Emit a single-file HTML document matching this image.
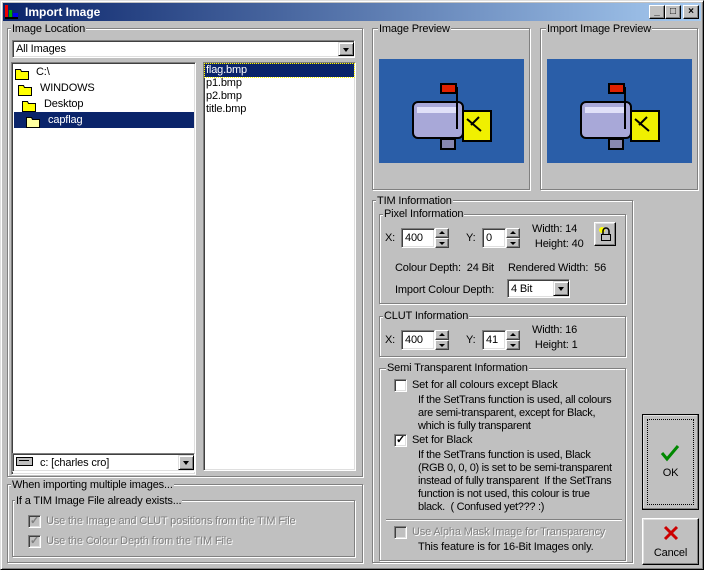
<!DOCTYPE html>
<html><head><meta charset="utf-8"><style>
*{box-sizing:border-box;margin:0;padding:0}
body{width:704px;height:570px;background:#c0c0c0;font-family:"Liberation Sans",Arial,sans-serif;font-size:11px;letter-spacing:-0.15px;color:#000;position:relative;overflow:hidden}
.a{position:absolute}
.win{left:0;top:0;width:704px;height:570px;border:1px solid;border-color:#dfdfdf #000 #000 #dfdfdf;box-shadow:inset 1px 1px #fff,inset -1px -1px #808080}
.title{left:3px;top:3px;width:698px;height:18px;background:linear-gradient(90deg,#0a246a,#a6caf0);color:#fff;font-weight:bold;font-size:12px;line-height:18px;padding-left:22px;letter-spacing:0}
.tb{top:5px;width:16px;height:14px;background:#c0c0c0;border:1px solid;border-color:#fff #000 #000 #fff;box-shadow:inset -1px -1px #808080;font-size:10px;line-height:12px;text-align:center;color:#000;font-weight:bold}
.grp{border:1px solid #808080;box-shadow:inset 1px 1px #fff,1px 1px #fff}
.lg{background:#c0c0c0;padding:0 1px;line-height:12px;white-space:nowrap}
.sunk{background:#fff;border:1px solid;border-color:#808080 #fff #fff #808080;box-shadow:inset 1px 1px #404040,inset -1px -1px #dfdfdf}
.dd{width:16px;background:#c0c0c0;border:1px solid;border-color:#dfdfdf #000 #000 #dfdfdf;box-shadow:inset 1px 1px #fff,inset -1px -1px #808080}
.dd:after{content:"";position:absolute;left:4px;top:5px;border:3px solid transparent;border-top:4px solid #000;border-bottom:0}
.btn{background:#c0c0c0;border:1px solid;border-color:#fff #000 #000 #fff;box-shadow:inset -1px -1px #808080,inset 1px 1px #dfdfdf;text-align:center}
.sp{width:14px;height:20px;background:#c0c0c0}
.sp i{position:absolute;left:0;width:14px;height:10px;border:1px solid;border-color:#fff #404040 #404040 #fff;box-shadow:inset -1px -1px #808080}
.sp i:after{content:"";position:absolute;left:3px;top:2px;border:3px solid transparent}
.sp i.u:after{border-bottom:3px solid #000;border-top:0}
.sp i.d:after{border-top:3px solid #000;border-bottom:0;top:3px}
.cb{width:13px;height:13px;background:#fff;border:1px solid;border-color:#808080 #fff #fff #808080;box-shadow:inset 1px 1px #404040,inset -1px -1px #dfdfdf;font-size:11px;line-height:10px;text-align:center;font-weight:bold}
.dis{color:#808080;text-shadow:1px 1px #fff}
.prev{background:#2a5ea8}
</style></head><body>
<div class="a win"></div>
<div class="a title">Import Image</div>
<svg class="a" style="left:4px;top:4px" width="16" height="16"><rect x="1" y="1" width="3" height="12" fill="#e00"/><rect x="5" y="6" width="3" height="8" fill="#0a0"/><rect x="9" y="9" width="5" height="5" fill="#00e"/><rect x="1" y="13" width="13" height="2" fill="#000"/></svg>
<div class="a tb" style="left:649px">_</div>
<div class="a tb" style="left:665px">□</div>
<div class="a tb" style="left:683px">×</div>

<div class="a grp" style="left:7px;top:28px;width:356px;height:449px"></div>
<div class="a lg" style="left:11px;top:23px">Image Location</div>
<div class="a sunk" style="left:12px;top:40px;width:343px;height:18px"><span class="a" style="left:3px;top:2px">All Images</span></div>
<div class="a dd" style="left:338px;top:42px;height:14px"></div>
<div class="a sunk" style="left:11px;top:62px;width:185px;height:413px"></div>
<div class="a" style="left:14px;top:64px;width:180px;line-height:16px">
<div style="padding-left:22px">C:\</div><div style="padding-left:26px">WINDOWS</div><div style="padding-left:30px">Desktop</div><div style="padding-left:34px;background:#0a246a;color:#fff">capflag</div></div>
<svg class="a" style="left:14px;top:65px" width="40" height="64" fill="#ff0" stroke="#000" stroke-width="1"><path d="M1.5 4.5h5l1 2h7v8h-13z"/><path d="M4.5 20.5h5l1 2h7v8h-13z"/><path d="M8.5 36.5h5l1 2h7v8h-13z"/><path d="M12.5 52.5h5l1 2h7v8h-13z" fill="#ffffa0"/></svg>
<div class="a sunk" style="left:12px;top:453px;width:183px;height:19px"><span class="a" style="left:27px;top:3px">c: [charles cro]</span></div>
<svg class="a" style="left:16px;top:457px" width="18" height="10"><rect x="0.5" y="0.5" width="16" height="8" fill="#c0c0c0" stroke="#000"/><rect x="3" y="3" width="10" height="1" fill="#000"/></svg>
<div class="a dd" style="left:178px;top:455px;height:15px"></div>
<div class="a sunk" style="left:203px;top:62px;width:153px;height:409px"></div>
<div class="a" style="left:205px;top:64px;line-height:13px;width:149px">
<div style="background:#0a246a;color:#fff;outline:1px dotted #ff0;padding-left:1px">flag.bmp</div><div style="padding-left:1px">p1.bmp</div><div style="padding-left:1px">p2.bmp</div><div style="padding-left:1px">title.bmp</div></div>

<div class="a grp" style="left:7px;top:484px;width:356px;height:79px"></div>
<div class="a lg" style="left:11px;top:479px">When importing multiple images...</div>
<div class="a grp" style="left:12px;top:500px;width:343px;height:57px"></div>
<div class="a lg" style="left:15px;top:495px">If a TIM Image File already exists...</div>
<div class="a cb" style="left:28px;top:515px;background:#c0c0c0;color:#808080">✓</div>
<div class="a dis" style="left:46px;top:515px">Use the Image and CLUT positions from the TIM File</div>
<div class="a cb" style="left:28px;top:535px;background:#c0c0c0;color:#808080">✓</div>
<div class="a dis" style="left:46px;top:535px">Use the Colour Depth from the TIM File</div>

<div class="a grp" style="left:372px;top:28px;width:158px;height:162px"></div>
<div class="a lg" style="left:378px;top:23px">Image Preview</div>
<div class="a grp" style="left:540px;top:28px;width:158px;height:162px"></div>
<div class="a lg" style="left:546px;top:23px">Import Image Preview</div>
<svg class="a prev" style="left:379px;top:59px" width="145" height="104"><g stroke="#000" stroke-width="2"><rect x="62" y="25" width="15" height="9" fill="#e02000"/><rect x="34" y="43" width="50" height="36" rx="5" fill="#a8a8d8"/><rect x="84" y="52" width="28" height="30" fill="#f0f000"/><rect x="62" y="80" width="14" height="10" fill="#8888b0"/></g><rect x="38" y="48" width="40" height="6" fill="#e0e0f8"/><path d="M88 60l14 12M100 58l-8 8" stroke="#000" stroke-width="2"/><rect x="77" y="28" width="2" height="42" fill="#000"/></svg>
<svg class="a prev" style="left:547px;top:59px" width="145" height="104"><g stroke="#000" stroke-width="2"><rect x="62" y="25" width="15" height="9" fill="#e02000"/><rect x="34" y="43" width="50" height="36" rx="5" fill="#a8a8d8"/><rect x="84" y="52" width="28" height="30" fill="#f0f000"/><rect x="62" y="80" width="14" height="10" fill="#8888b0"/></g><rect x="38" y="48" width="40" height="6" fill="#e0e0f8"/><path d="M88 60l14 12M100 58l-8 8" stroke="#000" stroke-width="2"/><rect x="77" y="28" width="2" height="42" fill="#000"/></svg>

<div class="a grp" style="left:372px;top:200px;width:261px;height:363px"></div>
<div class="a lg" style="left:376px;top:195px">TIM Information</div>
<div class="a grp" style="left:379px;top:214px;width:247px;height:90px"></div>
<div class="a lg" style="left:383px;top:208px">Pixel Information</div>
<div class="a" style="left:385px;top:232px">X:</div>
<div class="a sunk" style="left:401px;top:228px;width:34px;height:20px"><span class="a" style="left:3px;top:3px">400</span></div>
<div class="a sp" style="left:435px;top:228px"><i class="u" style="top:0"></i><i class="d" style="top:10px"></i></div>
<div class="a" style="left:466px;top:232px">Y:</div>
<div class="a sunk" style="left:482px;top:228px;width:24px;height:20px"><span class="a" style="left:3px;top:3px">0</span></div>
<div class="a sp" style="left:506px;top:228px"><i class="u" style="top:0"></i><i class="d" style="top:10px"></i></div>
<div class="a" style="left:532px;top:222px;line-height:15px">Width: 14<br>&nbsp;Height: 40</div>
<div class="a btn" style="left:594px;top:222px;width:22px;height:24px"></div>
<svg class="a" style="left:598px;top:226px" width="16" height="16"><circle cx="4" cy="4" r="3" fill="#ff0"/><path d="M5 8V5a3 3 0 0 1 6 0v3" fill="none" stroke="#000" stroke-width="1.5"/><rect x="3.5" y="8.5" width="9" height="6" fill="#c0c0c0" stroke="#000"/></svg>
<div class="a" style="left:395px;top:262px">Colour Depth:&nbsp; 24 Bit</div>
<div class="a" style="left:508px;top:262px">Rendered Width:&nbsp; 56</div>
<div class="a" style="left:395px;top:284px">Import Colour Depth:</div>
<div class="a sunk" style="left:507px;top:279px;width:63px;height:19px"><span class="a" style="left:3px;top:3px">4 Bit</span></div>
<div class="a dd" style="left:553px;top:281px;height:15px"></div>

<div class="a grp" style="left:379px;top:316px;width:247px;height:41px"></div>
<div class="a lg" style="left:383px;top:310px">CLUT Information</div>
<div class="a" style="left:385px;top:334px">X:</div>
<div class="a sunk" style="left:401px;top:330px;width:34px;height:20px"><span class="a" style="left:3px;top:3px">400</span></div>
<div class="a sp" style="left:435px;top:330px"><i class="u" style="top:0"></i><i class="d" style="top:10px"></i></div>
<div class="a" style="left:466px;top:334px">Y:</div>
<div class="a sunk" style="left:482px;top:330px;width:24px;height:20px"><span class="a" style="left:3px;top:3px">41</span></div>
<div class="a sp" style="left:506px;top:330px"><i class="u" style="top:0"></i><i class="d" style="top:10px"></i></div>
<div class="a" style="left:532px;top:323px;line-height:15px">Width: 16<br>&nbsp;Height: 1</div>

<div class="a grp" style="left:379px;top:368px;width:247px;height:193px"></div>
<div class="a lg" style="left:386px;top:362px">Semi Transparent Information</div>
<div class="a cb" style="left:394px;top:379px"></div>
<div class="a" style="left:412px;top:379px">Set for all colours except Black</div>
<div class="a" style="left:418px;top:394px;line-height:13px;letter-spacing:-0.3px">If the SetTrans function is used, all colours<br>are semi-transparent, except for Black,<br>which is fully transparent</div>
<div class="a cb" style="left:394px;top:434px">✓</div>
<div class="a" style="left:412px;top:434px">Set for Black</div>
<div class="a" style="left:418px;top:449px;line-height:13px;letter-spacing:-0.3px">If the SetTrans function is used, Black<br>(RGB 0, 0, 0) is set to be semi-transparent<br>instead of fully transparent&nbsp; If the SetTrans<br>function is not used, this colour is true<br>black.&nbsp; ( Confused yet??? :)</div>
<div class="a" style="left:386px;top:519px;width:236px;height:2px;border-top:1px solid #808080;border-bottom:1px solid #fff"></div>
<div class="a cb" style="left:394px;top:526px;background:#c0c0c0"></div>
<div class="a dis" style="left:412px;top:526px">Use Alpha Mask Image for Transparency</div>
<div class="a" style="left:418px;top:541px">This feature is for 16-Bit Images only.</div>

<div class="a btn" style="left:642px;top:414px;width:57px;height:96px;outline:1px solid #000;outline-offset:-1px"></div>
<div class="a" style="left:647px;top:419px;width:47px;height:86px;border:1px dotted #000"></div>
<svg class="a" style="left:660px;top:444px" width="20" height="18"><path d="M2 9l5 6L18 2" fill="none" stroke="#080" stroke-width="3"/></svg>
<div class="a" style="left:642px;top:467px;width:57px;text-align:center">OK</div>
<div class="a btn" style="left:642px;top:518px;width:57px;height:47px"></div>
<svg class="a" style="left:663px;top:525px" width="16" height="16"><path d="M2 2l12 12M14 2L2 14" stroke="#c00" stroke-width="3"/></svg>
<div class="a" style="left:642px;top:547px;width:57px;text-align:center">Cancel</div>
</body></html>
